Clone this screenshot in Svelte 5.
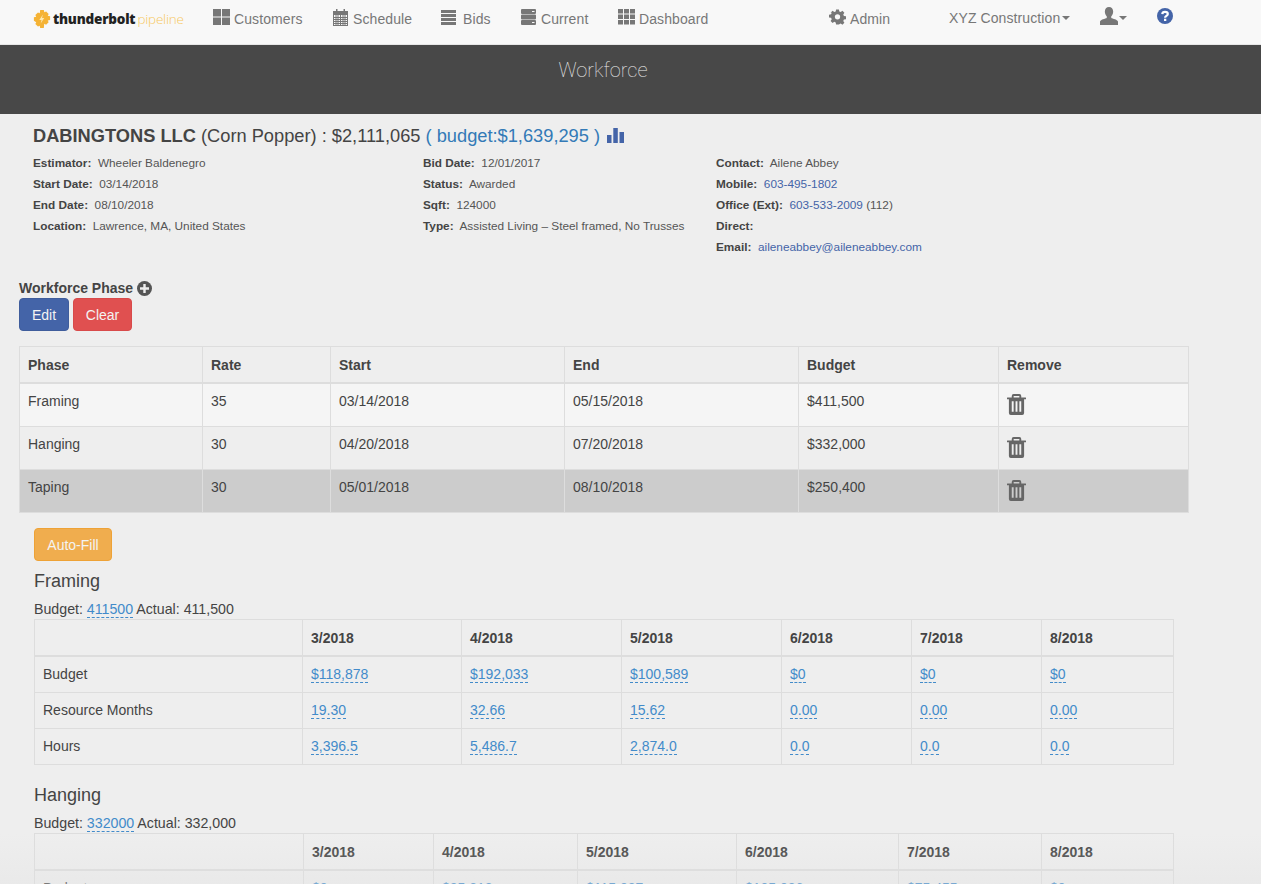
<script>
  const details = [
    [['Estimator:', 'Wheeler Baldenegro'], ['Start Date:', '03/14/2018'], ['End Date:', '08/10/2018'], ['Location:', 'Lawrence, MA, United States']],
    [['Bid Date:', '12/01/2017'], ['Status:', 'Awarded'], ['Sqft:', '124000'], ['Type:', 'Assisted Living – Steel framed, No Trusses']]
  ];
  const phases = [
    { name: 'Framing', rate: '35', start: '03/14/2018', end: '05/15/2018', budget: '$411,500', cls: 'light' },
    { name: 'Hanging', rate: '30', start: '04/20/2018', end: '07/20/2018', budget: '$332,000', cls: '' },
    { name: 'Taping', rate: '30', start: '05/01/2018', end: '08/10/2018', budget: '$250,400', cls: 'active' }
  ];
  const months = ['3/2018', '4/2018', '5/2018', '6/2018', '7/2018', '8/2018'];
  const framing = [
    ['Budget', '$118,878', '$192,033', '$100,589', '$0', '$0', '$0'],
    ['Resource Months', '19.30', '32.66', '15.62', '0.00', '0.00', '0.00'],
    ['Hours', '3,396.5', '5,486.7', '2,874.0', '0.0', '0.0', '0.0']
  ];
  const hanging = [['Budget', '$0', '$85,318', '$115,087', '$105,086', '$75,455', '$0']];
  const sections = [
    { title: 'Framing', budget: '411500', actual: '411,500', cols: [268, 159, 160, 160, 130, 130, 132], rows: framing },
    { title: 'Hanging', budget: '332000', actual: '332,000', cols: [269, 130, 144, 159, 162, 143, 132], rows: hanging }
  ];
</script>

<div class="page">
  <nav class="navbar">
    <div class="brand">
      <svg class="gear" viewBox="0 0 20 20" width="18" height="18">
        <path fill="#f5b335" d="M8 0h4l.6 2.600 2-.9 2.800 2.800-1 2 2.600.5v4l-2.600.6 1 2-2.900 2.800-2-1L12 20H8l-.5-2.600-2 1-2.900-2.800 1-2L1 12V8l2.600-.5-1-2 2.900-2.800 2 .9z"/>
        <path fill="#fde8b0" d="M11 5 7 11h2.500L8.500 15l4-6H10z"/>
      </svg>
      <span class="thunder">thunderbolt</span>
      <span class="pipeline">pipeline</span>
    </div>

    <a class="item customers">
      <svg viewBox="0 0 17 16" width="17" height="16"><path fill="#777" d="M0 0h8v7.500H0zM9 0h8v7.500H9zM0 8.500h8V16H0zM9 8.500h8V16H9z"/></svg>
      Customers
    </a>
    <a class="item schedule">
      <svg viewBox="0 0 15 17" width="15" height="17"><path fill="#777" fill-rule="evenodd" d="M3 0h1.500v2h6V0H12v2h3v15H0V2h3zM1 6v10h13V6z"/><path stroke="#777" stroke-width="1" d="M1 8.500h13M1 10.500h13M1 12.500h13M1 14.500h13M3 6v10M5 6v10M7.500 6v10M10 6v10M12 6v10"/></svg>
      Schedule
    </a>
    <a class="item bids">
      <svg viewBox="0 0 15 15" width="15" height="15"><path fill="#777" d="M0 0h15v3H0zM0 4h15v3H0zM0 8h15v3H0zM0 12h15v3H0z"/></svg>
      Bids
    </a>
    <a class="item current">
      <svg viewBox="0 0 15 16" width="15" height="16"><path fill="#777" fill-rule="evenodd" d="M1 0h13a1 1 0 0 1 1 1v3a1 1 0 0 1-1 1H1a1 1 0 0 1-1-1V1a1 1 0 0 1 1-1zm10 2v1h2.500V2zM1 5.500h13a1 1 0 0 1 1 1v3a1 1 0 0 1-1 1H1a1 1 0 0 1-1-1v-3a1 1 0 0 1 1-1zM1 11h13a1 1 0 0 1 1 1v3a1 1 0 0 1-1 1H1a1 1 0 0 1-1-1v-3a1 1 0 0 1 1-1zm10 2v1h2.500v-1z"/></svg>
      Current
    </a>
    <a class="item dash">
      <svg viewBox="0 0 17 16" width="17" height="16"><path fill="#777" d="M0 0h5v4.500H0zM6 0h5v4.500H6zM12 0h5v4.500h-5zM0 5.500h5V10H0zM6 5.500h5V10H6zM12 5.500h5V10h-5zM0 11h5v4.500H0zM6 11h5v4.500H6zM12 11h5v4.500h-5z"/></svg>
      Dashboard
    </a>
    <a class="item admin">
      <svg viewBox="-1 0 18 16" width="17" height="16"><path fill="#777" fill-rule="evenodd" d="M6.500 0h3l.4 2.100 1.500.6L13.200 1.500l2.100 2.100-1.200 1.800.7 1.500 2.200.4v3l-2.200.4-.7 1.500 1.200 1.800-2.100 2.100-1.800-1.200-1.500.7L9.500 16h-3l-.4-2.200-1.500-.7-1.800 1.200L.7 12.200l1.200-1.800-.7-1.500L-1 8.500v-3l2.200-.4.700-1.500L.7 3.600 2.800 1.500l1.800 1.200 1.500-.6zM8 5a2.800 2.800 0 1 0 0 5.600A2.800 2.800 0 0 0 8 5z"/></svg>
      Admin
    </a>
    <a class="item company">XYZ Construction<span class="caret"></span></a>
    <a class="item user">
      <svg viewBox="0 0 16 16" width="16" height="16"><path fill="#777" d="M8 0c2.300 0 3.700 1.700 3.700 4 0 1.800-.8 3.500-1.700 4.300v1.500c1 .6 6 1.500 6 3.400V16H0v-2.800c0-1.900 5-2.800 6-3.400V8.300C5.100 7.500 4.300 5.800 4.300 4 4.300 1.700 5.700 0 8 0z"/></svg>
      <span class="caret"></span>
    </a>
    <a class="item help">
      <svg viewBox="0 0 16 16" width="16" height="16"><circle cx="8" cy="8" r="8" fill="#4464a8"/><path fill="none" stroke="#fff" stroke-width="2.200" d="M5.300 6.100C5.400 4.600 6.500 3.800 8 3.800s2.800.8 2.800 2.200c0 1.900-2.700 1.900-2.700 3.700"/><path fill="#fff" d="M7 10.700h2.300V13H7z"/></svg>
    </a>
  </nav>

  <header class="banner"><h1>Workforce</h1></header>

  <main>
    <div class="job">
      <h2><b>DABINGTONS LLC</b> (Corn Popper) : $2,111,065 <span class="bud">( budget:$1,639,295 )</span>
        <svg viewBox="0 0 17 15" width="17" height="15"><path fill="#4464a8" d="M0 7h4.500v8H0zM6.300 0h4.500v15H6.300zM12.500 4H17v11h-4.500z"/></svg>
      </h2>
      <div class="info">
        {#each details as col, i}
          <div class="col c{i}">
            {#each col as [k, v]}
              <div class="line"><b>{k}</b>&nbsp; {v}</div>
            {/each}
          </div>
        {/each}
        <div class="col c2">
          <div class="line"><b>Contact:</b>&nbsp; Ailene Abbey</div>
          <div class="line"><b>Mobile:</b>&nbsp; <a>603-495-1802</a></div>
          <div class="line"><b>Office (Ext):</b>&nbsp; <a>603-533-2009</a> (112)</div>
          <div class="line"><b>Direct:</b></div>
          <div class="line"><b>Email:</b>&nbsp; <a>aileneabbey@aileneabbey.com</a></div>
        </div>
      </div>
    </div>

    <div class="phase-head">
      <b>Workforce Phase</b>
      <svg viewBox="0 0 16 16" width="15" height="15"><circle cx="8" cy="8" r="8" fill="#555"/><path fill="#eee" d="M6.700 3.200h2.600v3.500h3.500v2.600H9.300v3.500H6.700V9.300H3.200V6.700h3.500z"/></svg>
    </div>
    <div class="btns">
      <button class="btn blue">Edit</button>
      <button class="btn red">Clear</button>
    </div>

    <table class="phases">
      <colgroup><col style="width:183px"/><col style="width:128px"/><col style="width:234px"/><col style="width:234px"/><col style="width:200px"/><col style="width:190px"/></colgroup>
      <thead><tr><th>Phase</th><th>Rate</th><th>Start</th><th>End</th><th>Budget</th><th>Remove</th></tr></thead>
      <tbody>
        {#each phases as p}
          <tr class={p.cls}>
            <td>{p.name}</td><td>{p.rate}</td><td>{p.start}</td><td>{p.end}</td><td>{p.budget}</td>
            <td class="trash">
              <svg viewBox="0 0 20 22" width="19" height="21">
                <path fill="#666" fill-rule="evenodd" d="M7 0h6a2 2 0 0 1 2 2v1.500h4.500a.5.500 0 0 1 .5.500v1.500h-2V20a2 2 0 0 1-2 2H4a2 2 0 0 1-2-2V5.500H0V4a.5.500 0 0 1 .5-.500H5V2a2 2 0 0 1 2-2zm0 2v1.500h6V2zM5 7.500v11h2v-11zm4 0v11h2v-11zm4 0v11h2v-11z"/>
              </svg>
            </td>
          </tr>
        {/each}
      </tbody>
    </table>

    <div class="lower">
      <button class="btn orange">Auto-Fill</button>
      {#each sections as s}
        <section>
          <h3>{s.title}</h3>
          <div class="sum">Budget: <a class="ed">{s.budget}</a> Actual: {s.actual}</div>
          <table class="grid">
            <colgroup>{#each s.cols as w}<col style="width:{w}px"/>{/each}</colgroup>
            <thead><tr><th></th>{#each months as m}<th>{m}</th>{/each}</tr></thead>
            <tbody>
              {#each s.rows as r}
                <tr>
                  <td>{r[0]}</td>
                  {#each r.slice(1) as v}<td><a class="ed">{v}</a></td>{/each}
                </tr>
              {/each}
            </tbody>
          </table>
        </section>
      {/each}
    </div>
  </main>
  <div class="fade"></div>
</div>

<style>
  :global(body) { margin: 0; background: #eee; }
  .page {
    position: relative;
    height: 884px;
    overflow: hidden;
    background: #eee;
    font-family: "Liberation Sans", Arial, sans-serif;
    font-size: 14px;
    color: #444;
  }
  .navbar {
    display: flex;
    align-items: center;
    box-sizing: border-box;
    height: 45px;
    padding-bottom: 7px;
    background: #f8f8f8;
    border-bottom: 1px solid #e7e7e7;
    font-size: 14px;
    letter-spacing: .1px;
    color: #777;
  }
  .brand {
    display: flex;
    align-items: center;
    width: 180px;
    margin-left: 33px;
    white-space: nowrap;
  }
  .gear { margin-right: 2px; }
  .thunder { font-family: "Open Sans", sans-serif; font-weight: 800; font-size: 13.500px; color: #222; letter-spacing: -0.2px; }
  .pipeline { font-family: "Open Sans", sans-serif; font-weight: 300; font-size: 13.500px; color: #f7c860; margin-left: 2px; letter-spacing: -0.2px; }
  .item { display: flex; align-items: center; gap: 4px; white-space: nowrap; }
  .item svg { flex: none; margin-top: -3px; }
  .customers { width: 120px; }
  .schedule { width: 108px; gap: 5px; }
  .bids { width: 80px; gap: 7px; }
  .current { width: 97px; gap: 5px; }
  .dash { width: 211px; }
  .admin { width: 120px; gap: 4px; }
  .company { width: 151px; margin-top: -2px; gap: 0; letter-spacing: .1px; }
  .user { width: 57px; gap: 1px; margin-top: -2px; }
  .help { margin-top: -3px; }
  .caret { display: inline-block; width: 0; height: 0; border-left: 4px solid transparent; border-right: 4px solid transparent; border-top: 4px solid #777; }
  .company .caret { margin-left: 2px; }
  .user svg { width: 18px; height: 18px; }

  .banner { height: 69px; background: #484848; }
  .banner h1 { margin: 0; padding: 13px 55px 0 0; text-align: center; font-family: "Roboto", sans-serif; font-weight: 100; font-size: 20px; line-height: 24px; color: #eee; }

  .job { padding: 11px 0 0 33px; }
  h2 { margin: 0; font-size: 18.250px; line-height: 22px; font-weight: 400; color: #444; white-space: nowrap; }
  h2 b { font-weight: 700; }
  .bud { color: #337ab7; }
  h2 svg { vertical-align: -1px; margin-left: 2px; }
  .info { display: flex; margin-top: 6px; font-size: 11.800px; }
  .col { flex: none; }
  .c0 { width: 390px; }
  .c1 { width: 293px; }
  .line { height: 21px; line-height: 21px; white-space: nowrap; color: #555; }
  .line b { color: #444; font-size: 11.800px; }
  .line a { color: #4464a8; }

  .phase-head { display: flex; align-items: center; gap: 4px; margin: 21px 0 0 19px; height: 18px; font-size: 14px; color: #444; }
  .btns { display: flex; gap: 4px; margin: 1px 0 0 19px; }
  .btn { font: inherit; font-size: 14px; line-height: 20px; padding: 5px 12px; height: 33px; border-radius: 4px; color: #f3f3f3; border: 1px solid transparent; }
  .blue { background: #4464a8; border-color: #3f5d9c; width: 50px; padding: 0; }
  .red { background: #e05050; border-color: #d84a4a; width: 59px; padding: 0; }
  .orange { background: #f0ad4e; border-color: #eea236; width: 78px; height: 33px; padding: 0; }

  table { border-collapse: collapse; table-layout: fixed; }
  th, td { border: 1px solid #ddd; padding: 8px; text-align: left; font-size: 14px; line-height: 20px; vertical-align: top; color: #444; }
  th { font-weight: 700; border-bottom-width: 2px; }

  .phases { margin: 15px 0 0 19px; width: 1170px; }
  .phases th { height: 20px; padding: 8px 8px 7px; }
  .phases td { height: 26px; padding: 7px 8px 9px; }
  .light td { background: #f5f5f5; }
  .active td { background: #ccc; }
  .phases td.trash { padding: 10px 8px 0; }
  .trash svg { display: block; }

  .lower { margin: 15px 0 0 34px; }
  h3 { margin: 8px 0 0; font-size: 18px; line-height: 24px; font-weight: 400; color: #444; }
  .sum { margin-top: 6px; font-size: 14.200px; line-height: 20px; height: 20px; }
  .grid { width: 1140px; margin-bottom: 18px; }
  .grid td { padding: 7px 8px; line-height: 21px; }
  .grid th { padding: 8px 8px 6px; line-height: 21px; }
  .ed { color: #428bca; border-bottom: 1px dashed #428bca; }

  .fade { position: absolute; left: 0; right: 0; bottom: 0; height: 50px; background: linear-gradient(to bottom, rgba(225,225,225,0), rgba(225,225,225,.35)); pointer-events: none; }
</style>
